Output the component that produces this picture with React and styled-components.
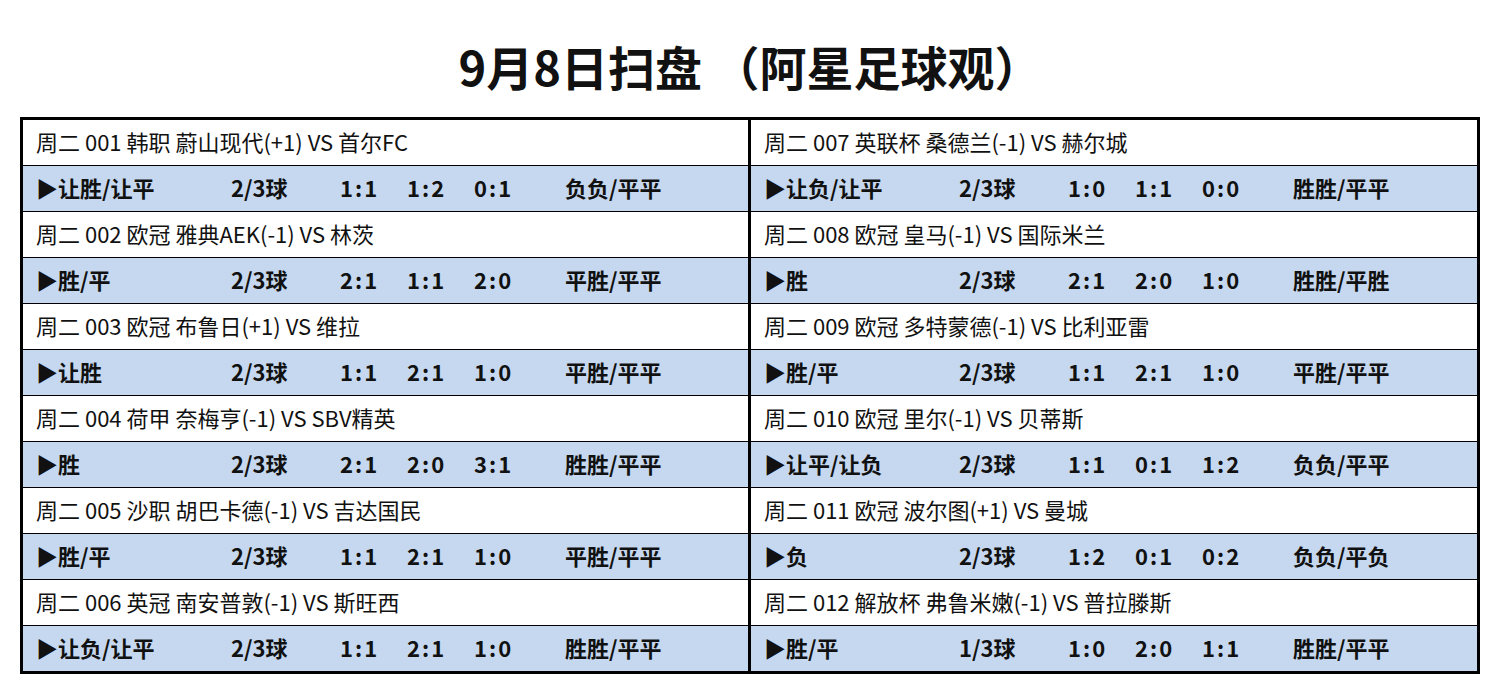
import React from "react";
import styled, { createGlobalStyle } from "styled-components";

const Global = createGlobalStyle`
  html, body { margin: 0; padding: 0; background: #fff; }
  body { font-family: "Noto Sans CJK SC", "Noto Sans", sans-serif; color: #111; }
`;

const Page = styled.div`
  width: 1500px;
  height: 699px;
  background: #fff;
  overflow: hidden;
`;

const Title = styled.h1`
  margin: 0;
  padding-top: 34px;
  height: 117px;
  box-sizing: border-box;
  line-height: 64px;
  font-size: 47px;
  font-weight: 700;
  text-align: center;
  color: #111;
  padding-left: 20px;
  width: 1480px;
`;

const Table = styled.div`
  margin-left: 20px;
  width: 1460px;
  box-sizing: border-box;
  border: 3px solid #000;
  display: flex;
`;

const Half = styled.div`
  display: flex;
  flex-direction: column;
  width: ${(p) => (p.$right ? "726px" : "725px")};
  ${(p) => (p.$right ? "border-left: 3px solid #000;" : "")}
`;

const InfoRow = styled.div`
  height: 46px;
  box-sizing: border-box;
  padding-bottom: 4px;
  border-bottom: 1px solid #000;
  background: #fff;
  display: flex;
  align-items: center;
  padding-left: 13px;
  font-size: 22px;
  font-weight: 400;
  white-space: nowrap;
`;

const PickRow = styled.div`
  height: ${(p) => (p.$last ? "45px" : "46px")};
  box-sizing: border-box;
  padding-bottom: 4px;
  border-bottom: ${(p) => (p.$last ? "none" : "1px solid #000")};
  background: #c6d8ef;
  display: grid;
  grid-template-columns: 195px 109px 67px 67px 91px 1fr;
  align-items: center;
  padding-left: 13px;
  font-size: 22px;
  font-weight: 700;
  white-space: nowrap;
`;

const Cell = styled.span``;

const Score = styled.span`
  letter-spacing: 2px;
`;

const left = [
  ["周二 001 韩职 蔚山现代(+1) VS 首尔FC", ["▶让胜/让平", "2/3球", "1:1", "1:2", "0:1", "负负/平平"]],
  ["周二 002 欧冠 雅典AEK(-1) VS 林茨", ["▶胜/平", "2/3球", "2:1", "1:1", "2:0", "平胜/平平"]],
  ["周二 003 欧冠 布鲁日(+1) VS 维拉", ["▶让胜", "2/3球", "1:1", "2:1", "1:0", "平胜/平平"]],
  ["周二 004 荷甲 奈梅亨(-1) VS SBV精英", ["▶胜", "2/3球", "2:1", "2:0", "3:1", "胜胜/平平"]],
  ["周二 005 沙职 胡巴卡德(-1) VS 吉达国民", ["▶胜/平", "2/3球", "1:1", "2:1", "1:0", "平胜/平平"]],
  ["周二 006 英冠 南安普敦(-1) VS 斯旺西", ["▶让负/让平", "2/3球", "1:1", "2:1", "1:0", "胜胜/平平"]],
];

const right = [
  ["周二 007 英联杯 桑德兰(-1) VS 赫尔城", ["▶让负/让平", "2/3球", "1:0", "1:1", "0:0", "胜胜/平平"]],
  ["周二 008 欧冠 皇马(-1) VS 国际米兰", ["▶胜", "2/3球", "2:1", "2:0", "1:0", "胜胜/平胜"]],
  ["周二 009 欧冠 多特蒙德(-1) VS 比利亚雷", ["▶胜/平", "2/3球", "1:1", "2:1", "1:0", "平胜/平平"]],
  ["周二 010 欧冠 里尔(-1) VS 贝蒂斯", ["▶让平/让负", "2/3球", "1:1", "0:1", "1:2", "负负/平平"]],
  ["周二 011 欧冠 波尔图(+1) VS 曼城", ["▶负", "2/3球", "1:2", "0:1", "0:2", "负负/平负"]],
  ["周二 012 解放杯 弗鲁米嫩(-1) VS 普拉滕斯", ["▶胜/平", "1/3球", "1:0", "2:0", "1:1", "胜胜/平平"]],
];

function Column({ data, isRight }) {
  return (
    <Half $right={isRight}>
      {data.map(([info, picks], i) => (
        <React.Fragment key={i}>
          <InfoRow>{info}</InfoRow>
          <PickRow $last={i === data.length - 1}>
            {picks.map((p, j) =>
              j >= 2 && j <= 4 ? <Score key={j}>{p}</Score> : <Cell key={j}>{p}</Cell>
            )}
          </PickRow>
        </React.Fragment>
      ))}
    </Half>
  );
}

export default function App() {
  return (
    <Page>
      <Global />
      <Title>9月8日扫盘 （阿星足球观）</Title>
      <Table>
        <Column data={left} />
        <Column data={right} isRight />
      </Table>
    </Page>
  );
}
